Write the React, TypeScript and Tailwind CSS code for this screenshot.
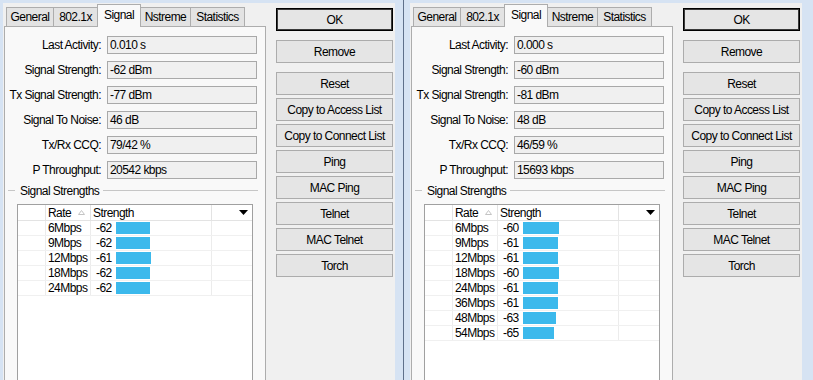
import React from 'react';

type Field = [string, string];
type Rate = [string, number];

interface WinProps {
  fields: Field[];
  rates: Rate[];
}

const tabs = [
  { name: 'General', w: 'w-[48px]' },
  { name: '802.1x', w: 'w-[45px]' },
  { name: 'Signal', w: 'w-[44px]', active: true },
  { name: 'Nstreme', w: 'w-[51px]' },
  { name: 'Statistics', w: 'w-[55px]' },
];

const buttons = [
  'OK',
  'Remove',
  'Reset',
  'Copy to Access List',
  'Copy to Connect List',
  'Ping',
  'MAC Ping',
  'Telnet',
  'MAC Telnet',
  'Torch',
];

const WinboxWindow: React.FC<WinProps> = ({ fields, rates }) => {
  return (
    <div className="flex h-full w-[392px] bg-[#f0f0f0] pl-[1px] pt-[1px]">
      {/* left: tabs + panel */}
      <div className="flex w-[262px] flex-col">
        <div className="flex h-[22px] items-end pl-[2px]">
          {tabs.map((t, i) =>
            t.active ? (
              <div
                key={t.name}
                className={`relative z-10 -mb-px flex h-[23px] ${t.w} ${i > 0 ? '-ml-px' : ''} items-start justify-center border border-b-0 border-[#adadad] bg-[#f9f9f9] pt-[2px] leading-[16px]`}
              >
                {t.name}
              </div>
            ) : (
              <div
                key={t.name}
                className={`flex h-[19px] ${t.w} ${i > 0 ? '-ml-px' : ''} items-center justify-center border border-b-0 border-[#adadad] bg-[#e3e3e3] leading-[16px]`}
              >
                {t.name}
              </div>
            )
          )}
        </div>

        <div className="flex min-h-0 flex-1 flex-col border border-b-0 border-[#adadad] bg-[#f9f9f9] pt-[9px]">
          {fields.map(([label, value]) => (
            <div key={label} className="mb-[7px] flex h-[18px] items-center">
              <div className="w-[96px] text-right leading-[16px]">{label}</div>
              <div className="ml-[6px] h-[18px] w-[150px] border border-[#a9a9a9] bg-[#f0f0f0] pl-[2px] leading-[16px]">
                {value}
              </div>
            </div>
          ))}

          <div className="flex h-[9px] items-center">
            <div className="ml-[3px] w-[7px] border-t border-[#c6c6c6]" />
            <span className="ml-[5px] leading-[14px]">Signal Strengths</span>
            <div className="ml-[4px] mr-[7px] flex-1 border-t border-[#c6c6c6]" />
          </div>

          <div className="ml-[12px] mt-[9px] flex w-[236px] flex-1 flex-col border border-b-0 border-[#a0a0a0] bg-white">
            <div className="flex h-[16px] border-b border-[#e3e3e3]">
              <div className="w-[28px] border-r border-[#e3e3e3]" />
              <div className="flex w-[45px] items-center border-r border-[#e3e3e3] pl-[2px] leading-[14px]">
                Rate
                <svg className="ml-auto mr-[5px]" width="7" height="5" viewBox="0 0 7 5">
                  <path d="M3.5 0.5 L6.5 4.5 L0.5 4.5 Z" fill="none" stroke="#c4c4c4" strokeWidth="1" />
                </svg>
              </div>
              <div className="flex w-[121px] items-center border-r border-[#e3e3e3] pl-[2px] leading-[14px]">
                Strength
              </div>
              <div className="flex flex-1 items-center justify-end pr-[4px]">
                <svg width="9" height="5" viewBox="0 0 9 5">
                  <path d="M0 0 L9 0 L4.5 5 Z" fill="#000" />
                </svg>
              </div>
            </div>
            {rates.map(([rate, dbm]) => (
              <div key={rate} className="flex h-[15px] border-b border-[#f0f0f0]">
                <div className="w-[28px] border-r border-[#ececec]" />
                <div className="w-[45px] border-r border-[#ececec] pl-[2px] leading-[14px]">{rate}</div>
                <div className="flex w-[121px] items-center border-r border-[#ececec] pl-[5px]">
                  <span className="w-[20px] leading-[14px]">{dbm}</span>
                  <div className="h-[12px] bg-[#3cb9ec]" style={{ width: 96 + dbm }} />
                </div>
                <div className="flex-1" />
              </div>
            ))}
          </div>
        </div>
      </div>

      {/* right: buttons */}
      <div className="ml-[10px] flex w-[117px] flex-col pt-[4px]">
        {buttons.map((b, i) => (
          <div
            key={b}
            className={`flex h-[23px] items-center justify-center leading-[16px] ${
              i === 0
                ? 'border border-black bg-[#e5e5e5] shadow-[inset_0_0_0_1px_#3a3a3a]'
                : 'border border-[#acacac] bg-[#e5e5e5]'
            } ${i === 1 || i === 2 ? 'mt-[9px]' : i > 2 ? 'mt-[3px]' : ''}`}
          >
            {b}
          </div>
        ))}
      </div>
    </div>
  );
};

const App: React.FC = () => {
  const leftFields: Field[] = [
    ['Last Activity:', '0.010 s'],
    ['Signal Strength:', '-62 dBm'],
    ['Tx Signal Strength:', '-77 dBm'],
    ['Signal To Noise:', '46 dB'],
    ['Tx/Rx CCQ:', '79/42 %'],
    ['P Throughput:', '20542 kbps'],
  ];
  const rightFields: Field[] = [
    ['Last Activity:', '0.000 s'],
    ['Signal Strength:', '-60 dBm'],
    ['Tx Signal Strength:', '-81 dBm'],
    ['Signal To Noise:', '48 dB'],
    ['Tx/Rx CCQ:', '46/59 %'],
    ['P Throughput:', '15693 kbps'],
  ];
  const leftRates: Rate[] = [
    ['6Mbps', -62],
    ['9Mbps', -62],
    ['12Mbps', -61],
    ['18Mbps', -62],
    ['24Mbps', -62],
  ];
  const rightRates: Rate[] = [
    ['6Mbps', -60],
    ['9Mbps', -61],
    ['12Mbps', -61],
    ['18Mbps', -60],
    ['24Mbps', -61],
    ['36Mbps', -61],
    ['48Mbps', -63],
    ['54Mbps', -65],
  ];

  return (
    <div className="flex h-[380px] w-[813px] overflow-hidden whitespace-nowrap bg-[#d6e3f3] font-['Liberation_Sans',Arial,sans-serif] text-[12px] tracking-[-0.55px] text-black">
      <div className="h-full pl-[3px] pr-[8px] pt-[3px]">
        <WinboxWindow fields={leftFields} rates={leftRates} />
      </div>
      <div className="h-full w-px bg-[#5f708a]" />
      <div className="h-full pl-[6px] pr-[11px] pt-[3px]">
        <WinboxWindow fields={rightFields} rates={rightRates} />
      </div>
    </div>
  );
};

export default App;
